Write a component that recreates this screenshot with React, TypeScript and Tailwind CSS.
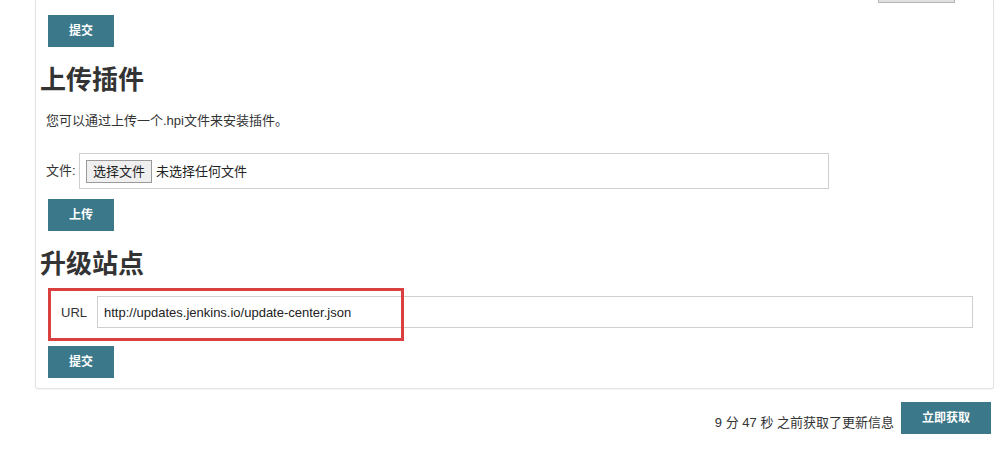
import React from 'react';

const font = "font-['Liberation_Sans','Noto_Sans_CJK_SC',sans-serif]";

function SubmitButton({ label }: { label: string }) {
  return (
    <button
      type="button"
      className="flex h-[32px] w-[66px] items-center justify-center bg-[#3a788a] text-[12px] font-bold text-white"
    >
      {label}
    </button>
  );
}

export default function App() {
  return (
    <div className={`min-h-[467px] w-[999px] bg-white text-[#333] ${font}`}>
      {/* 插件面板 */}
      <div className="ml-[35px] w-[959px] rounded-b-[3px] border-x border-b border-[#e3e3e3] pb-[10px] shadow-[0_1px_2px_rgba(0,0,0,0.04)]">
        {/* 上方被裁掉的按钮 */}
        <div className="flex h-[4px] justify-end overflow-hidden pr-[38px]">
          <div className="-mt-[27px] h-[30px] w-[77px] flex-none border border-[#b5b5b5] bg-[#e1e1e1]" />
        </div>

        <div className="ml-[12px] mt-[11px]">
          <SubmitButton label="提交" />
        </div>

        <h2 className="ml-[4px] mt-[18px] text-[26px] font-bold leading-[30px] text-[#333]">
          上传插件
        </h2>
        <p className="ml-[10px] mt-[17px] text-[13px] leading-[18px]">
          您可以通过上传一个.hpi文件来安装插件。
        </p>

        <div className="mt-[23px] flex items-center">
          <span className="ml-[10px] w-[33px] text-[13px] leading-[18px]">文件:</span>
          <div className="flex h-[36px] w-[750px] items-center border border-[#cfcfcf] px-[6px]">
            <span className="flex h-[23px] items-center border border-[#9a9a9a] bg-[#efefef] px-[6px] text-[13px] leading-none text-[#222]">
              选择文件
            </span>
            <span className="ml-[4px] text-[13px] leading-none text-[#222]">
              未选择任何文件
            </span>
          </div>
        </div>

        <div className="ml-[12px] mt-[10px]">
          <SubmitButton label="上传" />
        </div>

        <h2 className="ml-[4px] mt-[18px] text-[26px] font-bold leading-[30px] text-[#333]">
          升级站点
        </h2>

        <div className="relative mt-[17px] flex h-[32px] items-center">
          <span className="ml-[25px] w-[36px] text-[13px] leading-none">URL</span>
          <input
            readOnly
            value="http://updates.jenkins.io/update-center.json"
            className={`h-[32px] w-[876px] border border-[#cfcfcf] px-[6px] text-[13px] text-[#222] outline-none ${font}`}
          />
          {/* 标注框 */}
          <div className="pointer-events-none absolute left-[12px] top-[-8px] h-[53px] w-[356px] border-[3px] border-[#d9403f]" />
        </div>

        <div className="ml-[12px] mt-[18px]">
          <SubmitButton label="提交" />
        </div>
      </div>

      {/* 更新信息 */}
      <div className="mt-[13px] flex items-center justify-end gap-[7px] pr-[8px]">
        <span className="mt-[10px] text-[13px] leading-[18px]">9 分 47 秒 之前获取了更新信息</span>
        <button
          type="button"
          className="flex h-[32px] w-[90px] items-center justify-center bg-[#3a788a] text-[12px] font-bold text-white"
        >
          立即获取
        </button>
      </div>
    </div>
  );
}
